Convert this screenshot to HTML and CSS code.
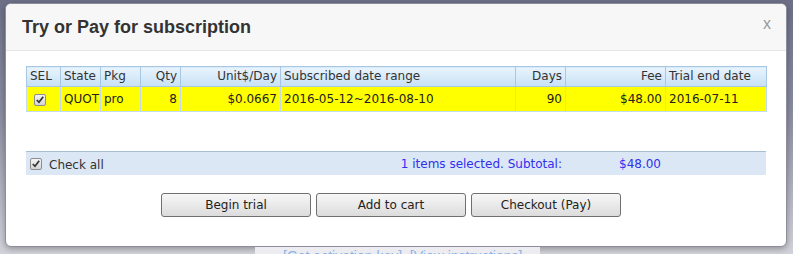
FILE: index.html
```html
<!DOCTYPE html>
<html lang="en">
<head>
    <meta charset="UTF-8">
    <meta name="viewport" content="width=device-width, initial-scale=1.0">
    <title>Try or Pay for subscription</title>
    <link rel="stylesheet" href="styles.css">
</head>
<body>
    <div class="modal">
        <div class="modal-header">
            <h3 class="modal-title">Try or Pay for subscription</h3>
            <span class="close">x</span>
        </div>
        <div class="modal-body">
            <table class="sub-table">
                <colgroup>
                    <col style="width: 34px">
                    <col style="width: 40px">
                    <col style="width: 40px">
                    <col style="width: 40px">
                    <col style="width: 100px">
                    <col style="width: 235px">
                    <col style="width: 50px">
                    <col style="width: 100px">
                    <col style="width: 101px">
                </colgroup>
                <thead>
                    <tr>
                        <th>SEL</th>
                        <th>State</th>
                        <th>Pkg</th>
                        <th class="num">Qty</th>
                        <th class="num">Unit$/Day</th>
                        <th>Subscribed date range</th>
                        <th class="num">Days</th>
                        <th class="num">Fee</th>
                        <th>Trial end date</th>
                    </tr>
                </thead>
                <tbody>
                    <tr class="selected">
                        <td><span class="check"><svg width="10" height="10" viewBox="0 0 10 10"><path d="M1.8 5 L4 7.3 L8.2 1.8" fill="none" stroke="#333" stroke-width="1.7"/></svg></span></td>
                        <td>QUOT</td>
                        <td>pro</td>
                        <td class="num">8</td>
                        <td class="num">$0.0667</td>
                        <td>2016-05-12~2016-08-10</td>
                        <td class="num">90</td>
                        <td class="num">$48.00</td>
                        <td>2016-07-11</td>
                    </tr>
                </tbody>
            </table>

            <div class="summary-bar">
                <label class="check-all">
                    <span class="check"><svg width="10" height="10" viewBox="0 0 10 10"><path d="M1.8 5 L4 7.3 L8.2 1.8" fill="none" stroke="#333" stroke-width="1.7"/></svg></span>
                    <span class="check-label">Check all</span>
                </label>
                <span class="summary">1 items selected. Subtotal:</span>
                <span class="subtotal">$48.00</span>
            </div>

            <div class="actions">
                <button type="button">Begin trial</button>
                <button type="button">Add to cart</button>
                <button type="button">Checkout (Pay)</button>
            </div>
        </div>
    </div>
    <div class="page-links">[Get activation key]&nbsp;&nbsp;[View instructions]</div>
</body>
</html>
```

FILE: styles.css
```css
body {
    margin: 0;
    height: 254px;
    overflow: hidden;
    background: linear-gradient(180deg, #6d6f87 0%, #8b8da1 45%, #b9bac6 80%, #d2d3da 100%);
    font-family: "DejaVu Sans", Verdana, sans-serif;
    font-size: 12px;
    color: #333;
}
.modal {
    width: 782px;
    margin: 3px 0 0 5px;
    box-sizing: border-box;
    background: #fff;
    border: 1px solid #8d8d9c;
    border-radius: 6px;
    box-shadow: 0 2px 6px rgba(0, 0, 0, 0.3);
    overflow: hidden;
}
.modal-header {
    display: flex;
    align-items: flex-start;
    padding: 13px 15px 13px 16px;
    background: #f7f7f7;
    border-bottom: 1px solid #e5e5e5;
}
.modal-title {
    margin: 0;
    font: bold 18px/20px "Liberation Sans", Arial, sans-serif;
    color: #333;
}
.close {
    margin: -3px 0 0 auto;
    font: 16px/20px "Liberation Sans", Arial, sans-serif;
    color: #999;
    cursor: pointer;
}
.modal-body {
    padding: 15px 20px 29px;
}
.sub-table {
    width: 740px;
    border-collapse: collapse;
    table-layout: fixed;
}
.sub-table th,
.sub-table td {
    text-align: left;
    white-space: nowrap;
    overflow: hidden;
}
.sub-table th {
    padding: 2px 3px;
    line-height: 15px;
    font-weight: normal;
    color: #333;
    background: linear-gradient(#e9f4fd, #c7e1f5);
    border: 1px solid #a7c7e3;
}
.sub-table td {
    padding: 4px 3px;
    line-height: 16px;
    color: #222;
    border: 1px solid #c4dbef;
}
.sub-table .selected td {
    background: #ffff00;
}
.sub-table .num {
    text-align: right;
}
.check {
    display: inline-block;
    width: 10px;
    height: 10px;
    margin-left: 4px;
    vertical-align: middle;
    border: 1px solid #8e8e8e;
    border-radius: 2px;
    background: linear-gradient(#f4f4f4, #d4d4d4);
}
.check svg {
    display: block;
}
.summary-bar {
    display: flex;
    align-items: center;
    height: 23px;
    margin-top: 39px;
    background: #dbe7f5;
    border-top: 1px solid #a9bdd5;
}
.check-all {
    display: flex;
    align-items: center;
}
.check-label {
    margin-left: 7px;
    padding-top: 3px;
    color: #333;
}
.summary {
    flex: 1;
    text-align: right;
    padding-right: 3px;
    color: #3030ee;
}
.subtotal {
    width: 100px;
    box-sizing: border-box;
    padding-right: 4px;
    margin-right: 101px;
    text-align: right;
    color: #3030ee;
}
.actions {
    display: flex;
    justify-content: center;
    gap: 5px;
    margin-top: 18px;
    padding-right: 10px;
}
.actions button {
    width: 150px;
    height: 24px;
    padding: 0;
    border: 1px solid #707070;
    border-radius: 3px;
    background: linear-gradient(#f7f7f7, #dcdcdc);
    font: 12px "DejaVu Sans", Verdana, sans-serif;
    color: #222;
    cursor: pointer;
}
.page-links {
    width: 257px;
    margin-left: 255px;
    padding: 1px 0 0 28px;
    background: #ececf1;
    color: #8db3e6;
    font: 14px/16px "Liberation Sans", Arial, sans-serif;
}
```
